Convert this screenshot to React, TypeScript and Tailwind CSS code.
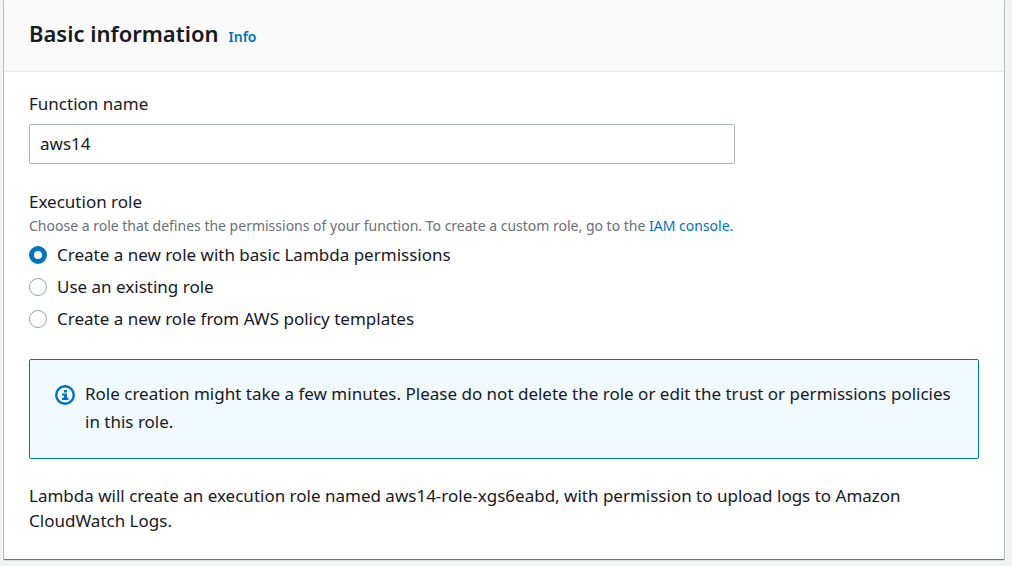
import { useState } from "react";

const roleOptions = [
  { id: "new", label: "Create a new role with basic Lambda permissions" },
  { id: "existing", label: "Use an existing role" },
  { id: "template", label: "Create a new role from AWS policy templates" },
];

function InfoIcon() {
  return (
    <svg viewBox="0 0 20 20" className="mt-[5px] size-5 shrink-0" fill="none" aria-hidden="true">
      <circle cx="10" cy="10" r="8.8" stroke="#0073bb" strokeWidth="2.4" />
      <path d="M9 5h3v2.4H9zM7 8.4h5v4.4h1.4V15H7v-2.2h2v-2.2H7z" fill="#0073bb" />
    </svg>
  );
}

function RoleOptions() {
  const [selected, setSelected] = useState("new");
  return (
    <div className="mt-[5px] flex flex-col gap-2">
      {roleOptions.map((option) => (
        <label key={option.id} className="flex min-h-6 items-center gap-2.5 leading-6">
          <input
            type="radio"
            name="execution-role"
            value={option.id}
            checked={selected === option.id}
            onChange={() => setSelected(option.id)}
            className="size-4.5 shrink-0 appearance-none rounded-full border border-[#95a5a6] bg-white checked:border-[5px] checked:border-[#0073bb]"
          />
          {option.label}
        </label>
      ))}
    </div>
  );
}

export default function App() {
  const [name, setName] = useState("aws14");
  return (
    <main className="min-h-screen bg-[#f2f3f3] pr-2 pl-1 font-['Noto_Sans',sans-serif] text-[17px] text-[#16191f]">
      <section className="bg-white shadow-[0_1px_1px_0_#687078,0_0_0_1px_#c8cfd1]">
        <header className="flex items-baseline gap-2.5 border-b border-[#eaeded] bg-[#fafafa] px-[25px] pt-4 pb-5">
          <h2 className="text-[22px] leading-[35px] font-semibold">Basic information</h2>
          <a href="#info" className="text-sm font-semibold text-[#0073bb]">Info</a>
        </header>
        <div className="px-[25px] pt-5 pb-[26px]">
          <label htmlFor="function-name" className="block leading-6">Function name</label>
          <input
            id="function-name"
            type="text"
            value={name}
            onChange={(event) => setName(event.target.value)}
            className="mt-2 block h-10 w-full max-w-[706px] rounded-xs border border-[#aab7b8] bg-white px-2.5 pb-0.5 outline-none"
          />
          <fieldset className="mt-[26px]">
            <legend className="leading-6">Execution role</legend>
            <p className="text-sm leading-6 text-[#687078]">
              Choose a role that defines the permissions of your function. To create a custom role, go to the{" "}
              <a href="#iam" className="text-[#0073bb]">IAM console</a>
              <span className="text-[#0073bb]">.</span>
            </p>
            <RoleOptions />
          </fieldset>
          <div className="mt-7 flex gap-2.5 rounded-xs border border-[#0073bb] bg-[#f1faff] px-[25px] pt-5 pb-[22px] leading-7">
            <InfoIcon />
            <p>
              Role creation might take a few minutes. Please do not delete the role or edit the trust or permissions policies in this role.
            </p>
          </div>
          <p className="mt-6 leading-[25px]">
            Lambda will create an execution role named aws14-role-xgs6eabd, with permission to upload logs to Amazon CloudWatch Logs.
          </p>
        </div>
      </section>
    </main>
  );
}
